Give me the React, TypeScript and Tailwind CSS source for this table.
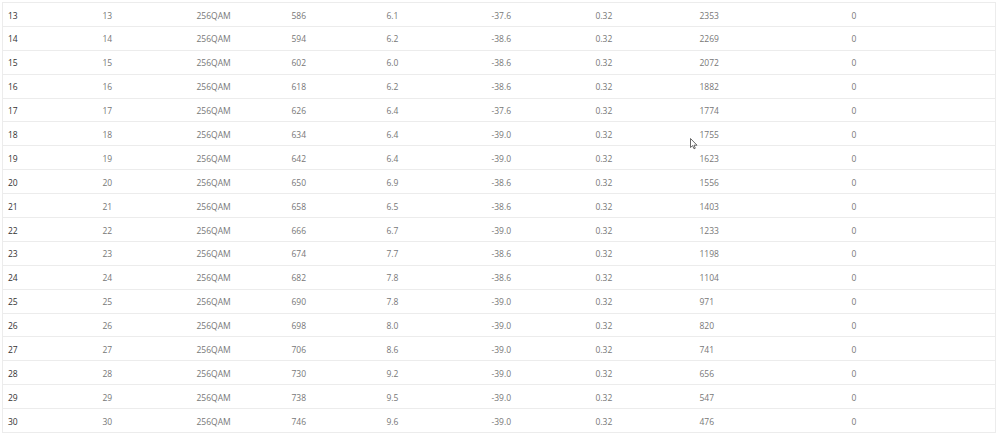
const rows: [number, number, string, number, string, string, string, number, number][] = [
  [13, 13, "256QAM", 586, "6.1", "-37.6", "0.32", 2353, 0],
  [14, 14, "256QAM", 594, "6.2", "-38.6", "0.32", 2269, 0],
  [15, 15, "256QAM", 602, "6.0", "-38.6", "0.32", 2072, 0],
  [16, 16, "256QAM", 618, "6.2", "-38.6", "0.32", 1882, 0],
  [17, 17, "256QAM", 626, "6.4", "-37.6", "0.32", 1774, 0],
  [18, 18, "256QAM", 634, "6.4", "-39.0", "0.32", 1755, 0],
  [19, 19, "256QAM", 642, "6.4", "-39.0", "0.32", 1623, 0],
  [20, 20, "256QAM", 650, "6.9", "-38.6", "0.32", 1556, 0],
  [21, 21, "256QAM", 658, "6.5", "-38.6", "0.32", 1403, 0],
  [22, 22, "256QAM", 666, "6.7", "-39.0", "0.32", 1233, 0],
  [23, 23, "256QAM", 674, "7.7", "-38.6", "0.32", 1198, 0],
  [24, 24, "256QAM", 682, "7.8", "-38.6", "0.32", 1104, 0],
  [25, 25, "256QAM", 690, "7.8", "-39.0", "0.32", 971, 0],
  [26, 26, "256QAM", 698, "8.0", "-39.0", "0.32", 820, 0],
  [27, 27, "256QAM", 706, "8.6", "-39.0", "0.32", 741, 0],
  [28, 28, "256QAM", 730, "9.2", "-39.0", "0.32", 656, 0],
  [29, 29, "256QAM", 738, "9.5", "-39.0", "0.32", 547, 0],
  [30, 30, "256QAM", 746, "9.6", "-39.0", "0.32", 476, 0],
];

export default function App() {
  return (
    <div className="relative w-[999px] h-[434px] bg-white pt-[2px] pl-[2px]" style={{ fontFamily: '"Open Sans", sans-serif' }}>
      <table className="w-[994px] border-collapse table-fixed border border-[#ececec] text-[8.5px]">
        <colgroup>
          <col className="w-[95px]" />
          <col className="w-[94px]" />
          <col className="w-[95px]" />
          <col className="w-[95px]" />
          <col className="w-[105px]" />
          <col className="w-[104px]" />
          <col className="w-[104px]" />
          <col className="w-[152px]" />
          <col />
        </colgroup>
        <tbody>
          {rows.map((r) => (
            <tr key={r[0]} className="h-[23.9px] border-t border-[#ececec]">
              <td className="pl-[5px] pt-[3px] pb-0 text-[#333]">{r[0]}</td>
              {r.slice(1).map((v, i) => (
                <td key={i} className="pl-[5px] pt-[3px] pb-0 text-[#777]">{v}</td>
              ))}
            </tr>
          ))}
        </tbody>
      </table>
      {/* mouse pointer */}
      <svg className="absolute left-[690px] top-[138px]" width="8" height="12" viewBox="0 0 8 12">
        <path d="M0.5 0.5 L0.5 9.5 L2.6 7.6 L4 10.8 L5.3 10.2 L4 7.2 L7 7.2 Z" fill="#fff" stroke="#444" strokeWidth="0.8" strokeLinejoin="round" />
      </svg>
    </div>
  );
}
